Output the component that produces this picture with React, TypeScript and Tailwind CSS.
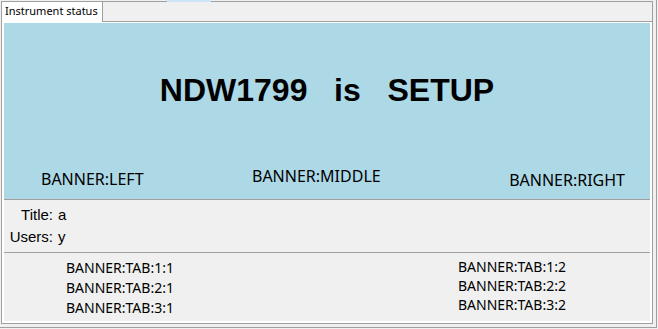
import React from 'react';

const leftTabs = ['BANNER:TAB:1:1', 'BANNER:TAB:2:1', 'BANNER:TAB:3:1'];
const rightTabs = ['BANNER:TAB:1:2', 'BANNER:TAB:2:2', 'BANNER:TAB:3:2'];

export default function App() {
  return (
    <div className="relative w-[658px] h-[329px] bg-[#f0f0f0] overflow-hidden font-['Noto_Sans',sans-serif] text-black">
      <div className="absolute top-0 left-[167px] w-[44px] h-[2px] bg-[#cde6f7]" />
      <div className="w-[657px] h-[328px] border-r border-b border-[#a0a0a0] pl-px pt-px">
        <div className="w-[652px] h-[323px] border border-[#a0a0a0] flex flex-col">
          {/* tab strip */}
          <div className="flex h-[20px] shrink-0">
            <div className="bg-white border-r border-[#a0a0a0] pl-[3px] pr-[4px] text-[11px] leading-[18px]">
              Instrument status
            </div>
            <div className="flex-1 border-b border-[#a0a0a0]" />
          </div>

          {/* page */}
          <div className="flex-1 bg-white pt-px px-[2px] pb-[2px] flex flex-col">
            <div className="h-[177px] shrink-0 bg-[#add8e6] border-b border-[#a0a0a0] flex flex-col">
              <div className="pt-[49px] text-center font-['Liberation_Sans',Arial,sans-serif] font-bold text-[32px] leading-[36px] whitespace-pre">
                {'NDW1799   is   SETUP'}
              </div>
              <div className="mt-auto flex items-start pl-[37px] pr-[25px] pb-[9px] text-[16px] leading-[20px]">
                <div className="w-[211px] mt-[3px]">BANNER:LEFT</div>
                <div className="flex-1">BANNER:MIDDLE</div>
                <div className="mt-[4px] text-right">BANNER:RIGHT</div>
              </div>
            </div>

            <div className="h-[53px] shrink-0 bg-[#f0f0f0] border-b border-[#a0a0a0] pt-[4px] font-['Liberation_Sans',Arial,sans-serif] text-[15px] leading-[22px]">
              <div className="grid grid-cols-[49px_1fr] gap-x-[5px]">
                <div className="text-right">Title:</div>
                <div>a</div>
                <div className="text-right">Users:</div>
                <div>y</div>
              </div>
            </div>

            <div className="flex-1 bg-[#f0f0f0] flex text-[14px]">
              <div className="w-[454px] pl-[62px] pt-[5px] leading-[20px]">
                {leftTabs.map((t) => (
                  <div key={t}>{t}</div>
                ))}
              </div>
              <div className="pt-[4px] leading-[19px]">
                {rightTabs.map((t) => (
                  <div key={t}>{t}</div>
                ))}
              </div>
            </div>
          </div>
        </div>
      </div>
    </div>
  );
}
